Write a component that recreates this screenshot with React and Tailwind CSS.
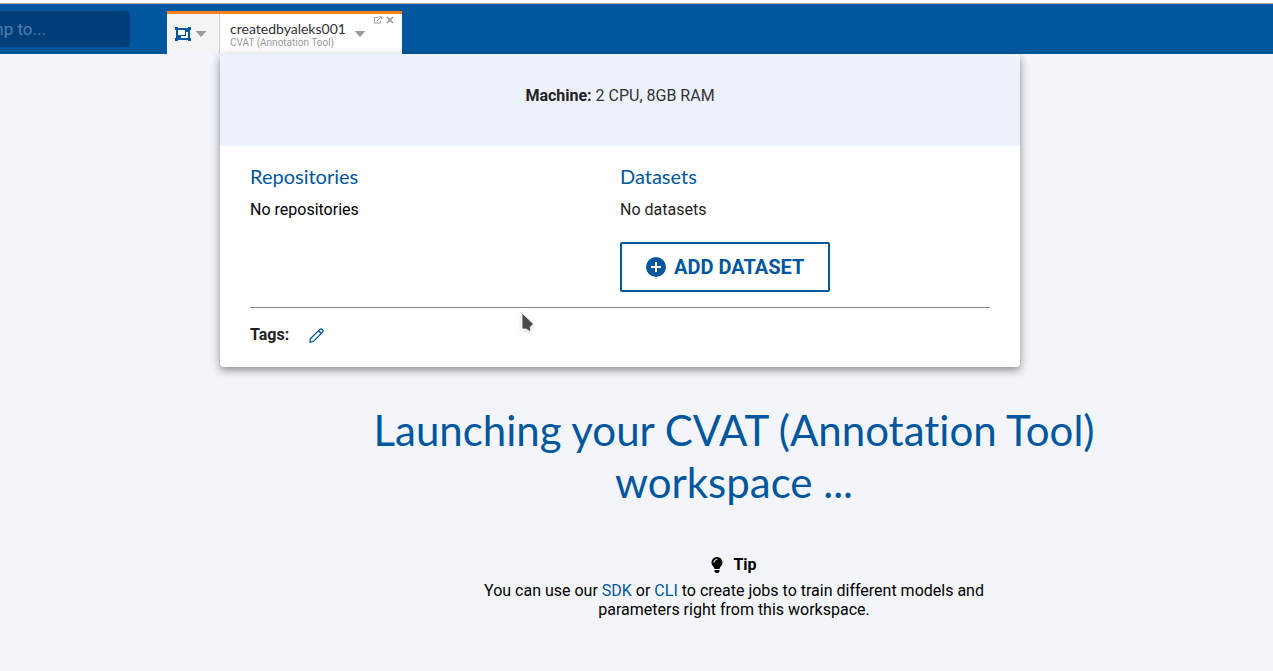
import { FaLightbulb } from 'react-icons/fa';

const ROBOTO = "font-['Roboto',sans-serif]";
const DISPLAY = "font-['Lato',sans-serif] [font-variant-ligatures:none]";

function Caret() {
  return (
    <svg viewBox="0 0 12 6" className="h-[6px] w-[12px]" aria-hidden="true">
      <path d="M0.5 0H11.5L6 6Z" fill="#9c9c9c" />
    </svg>
  );
}

function WorkspaceIcon() {
  return (
    <svg viewBox="0 0 16 14" className="h-[14px] w-[16px]" shapeRendering="crispEdges" aria-hidden="true">
      <path d="M0 0H3V1H13V0H16V3H15V11H16V14H13V13H3V14H0V11H1V3H0Z" fill="#00579d" />
      <path d="M3 3H10V8H3Z" fill="#fff" />
      <path d="M11 5H13V11H6V9H11Z" fill="#fff" />
    </svg>
  );
}

function OpenIcon() {
  return (
    <svg viewBox="0 0 9 9" className="h-[8px] w-[8px]" fill="none" stroke="#9a9a9a" aria-hidden="true">
      <path d="M5 1.5H0.5V8H7V5" />
      <path d="M3 6L7.5 1.5M5.5 0.8H8.3V3.5" />
    </svg>
  );
}

function CloseIcon() {
  return (
    <svg viewBox="0 0 8 8" className="h-[8px] w-[8px]" fill="none" stroke="#999" strokeWidth="1.7" aria-hidden="true">
      <path d="M1 1L7 7M7 1L1 7" />
    </svg>
  );
}

function PlusIcon() {
  return (
    <svg viewBox="0 0 20 20" className="h-5 w-5" aria-hidden="true">
      <circle cx="10" cy="10" r="10" fill="#00579d" />
      <path d="M10 5V15M5 10H15" stroke="#fff" strokeWidth="2" />
    </svg>
  );
}

function PencilIcon() {
  return (
    <svg viewBox="0 0 15 15" className="h-[15px] w-[15px]" fill="none" stroke="#00579d" strokeWidth="1.3" strokeLinejoin="round" aria-hidden="true">
      <path d="M0.900 14.100L1.400 10.800L10.600 1.600Q12 0.300 13.400 1.600T13.400 4.400L4.200 13.600Z" />
      <path d="M9.500 2.700L12.300 5.500" />
    </svg>
  );
}

function Pointer() {
  return (
    <svg viewBox="0 0 14 22" className="pointer-events-none absolute top-[258px] left-[301px] h-[22px] w-[14px] drop-shadow-sm" aria-hidden="true">
      <path d="M1 1L12.500 12L9.200 15L9.800 20L5 17H1Z" fill="#4a4a4a" stroke="#fff" strokeWidth="0.8" />
    </svg>
  );
}

function WorkspacePanel() {
  return (
    <section
      aria-label="Workspace details"
      className="absolute top-full left-0 z-10 w-[800px] overflow-hidden rounded bg-white text-base leading-5 text-[#222] shadow-[0_3px_8px_rgba(0,0,0,0.45)]"
    >
      <p className="bg-[#edf1fc] pt-8 pb-10 text-center text-[#333]">
        <strong className="font-bold text-[#222]">Machine:</strong> 2 CPU, 8GB RAM
      </p>
      <div className="px-[30px] pt-[18px] pb-[22px]">
        <div className="grid grid-cols-2 border-b border-[#888] pb-[15px]">
          <div>
            <h2 className={`${DISPLAY} text-xl leading-6 text-[#00579d]`}>Repositories</h2>
            <p className="mt-3 text-black">No repositories</p>
          </div>
          <div>
            <h2 className={`${DISPLAY} text-xl leading-6 text-[#00579d]`}>Datasets</h2>
            <p className="mt-3">No datasets</p>
            <button
              type="button"
              className="mt-[22px] flex h-[50px] items-center gap-2 rounded-xs border-2 border-[#00579d] px-6 text-xl leading-6 font-bold text-[#00579d]"
            >
              <PlusIcon />
              ADD DATASET
            </button>
          </div>
        </div>
        <div className="flex items-center gap-5 pt-[17px]">
          <span className="font-bold">Tags:</span>
          <button type="button" aria-label="Edit tags">
            <PencilIcon />
          </button>
        </div>
      </div>
      <Pointer />
    </section>
  );
}

export default function App() {
  return (
    <div className={`${ROBOTO} min-h-screen overflow-x-hidden bg-[#f4f5fa] text-black`}>
      <div className="h-1 border-b border-[#aaa] bg-white" />
      <header className="flex h-[50px] items-start bg-[#00579d] pt-[7px]">
        <input
          type="search"
          aria-label="Jump to"
          placeholder="Jump to..."
          className="-ml-[42px] h-9 w-[172px] rounded bg-[#003e7a] px-3 text-[17px] text-white placeholder:text-[#4f7fae]"
        />
        <div className="ml-[37px] flex h-[43px] border-t-[3px] border-[#f5821f]">
          <button type="button" aria-label="Workspaces" className="flex items-center gap-1 border-r border-[#ccc] bg-[#f4f4f4] pr-3 pl-2">
            <WorkspaceIcon />
            <Caret />
          </button>
          <div className="relative flex w-[182px] items-start bg-white pl-[10px]">
            <div className="pt-[7px]">
              <div className={`${DISPLAY} text-sm leading-4 text-[#333]`}>createdbyaleks001</div>
              <div className="text-[10px] leading-3 text-[#999]">CVAT (Annotation Tool)</div>
            </div>
            <button type="button" aria-label="Workspace menu" aria-expanded="true" className="mt-[17px] ml-2">
              <Caret />
            </button>
            <div className="ml-2 flex gap-1 pt-[2px]">
              <button type="button" aria-label="Open in new window">
                <OpenIcon />
              </button>
              <button type="button" aria-label="Close">
                <CloseIcon />
              </button>
            </div>
            <WorkspacePanel />
          </div>
        </div>
      </header>
      <main className="pt-[350px] pb-[51px] pl-[195px] text-center">
        <h1 className={`${DISPLAY} mx-auto max-w-[760px] text-[42px] leading-[52px] text-[#00579d]`}>
          Launching your CVAT (Annotation Tool) workspace ...
        </h1>
        <h2 className="mt-[47px] flex items-center justify-center gap-[10px] text-base leading-5 font-bold">
          <FaLightbulb className="h-4 w-3" aria-hidden="true" />
          Tip
        </h2>
        <p className="mx-auto mt-[6px] max-w-[520px] text-base leading-[19px]">
          You can use our <a href="#sdk" className="text-[#00579d]">SDK</a> or{' '}
          <a href="#cli" className="text-[#00579d]">CLI</a> to create jobs to train different models and parameters right from this workspace.
        </p>
      </main>
    </div>
  );
}
